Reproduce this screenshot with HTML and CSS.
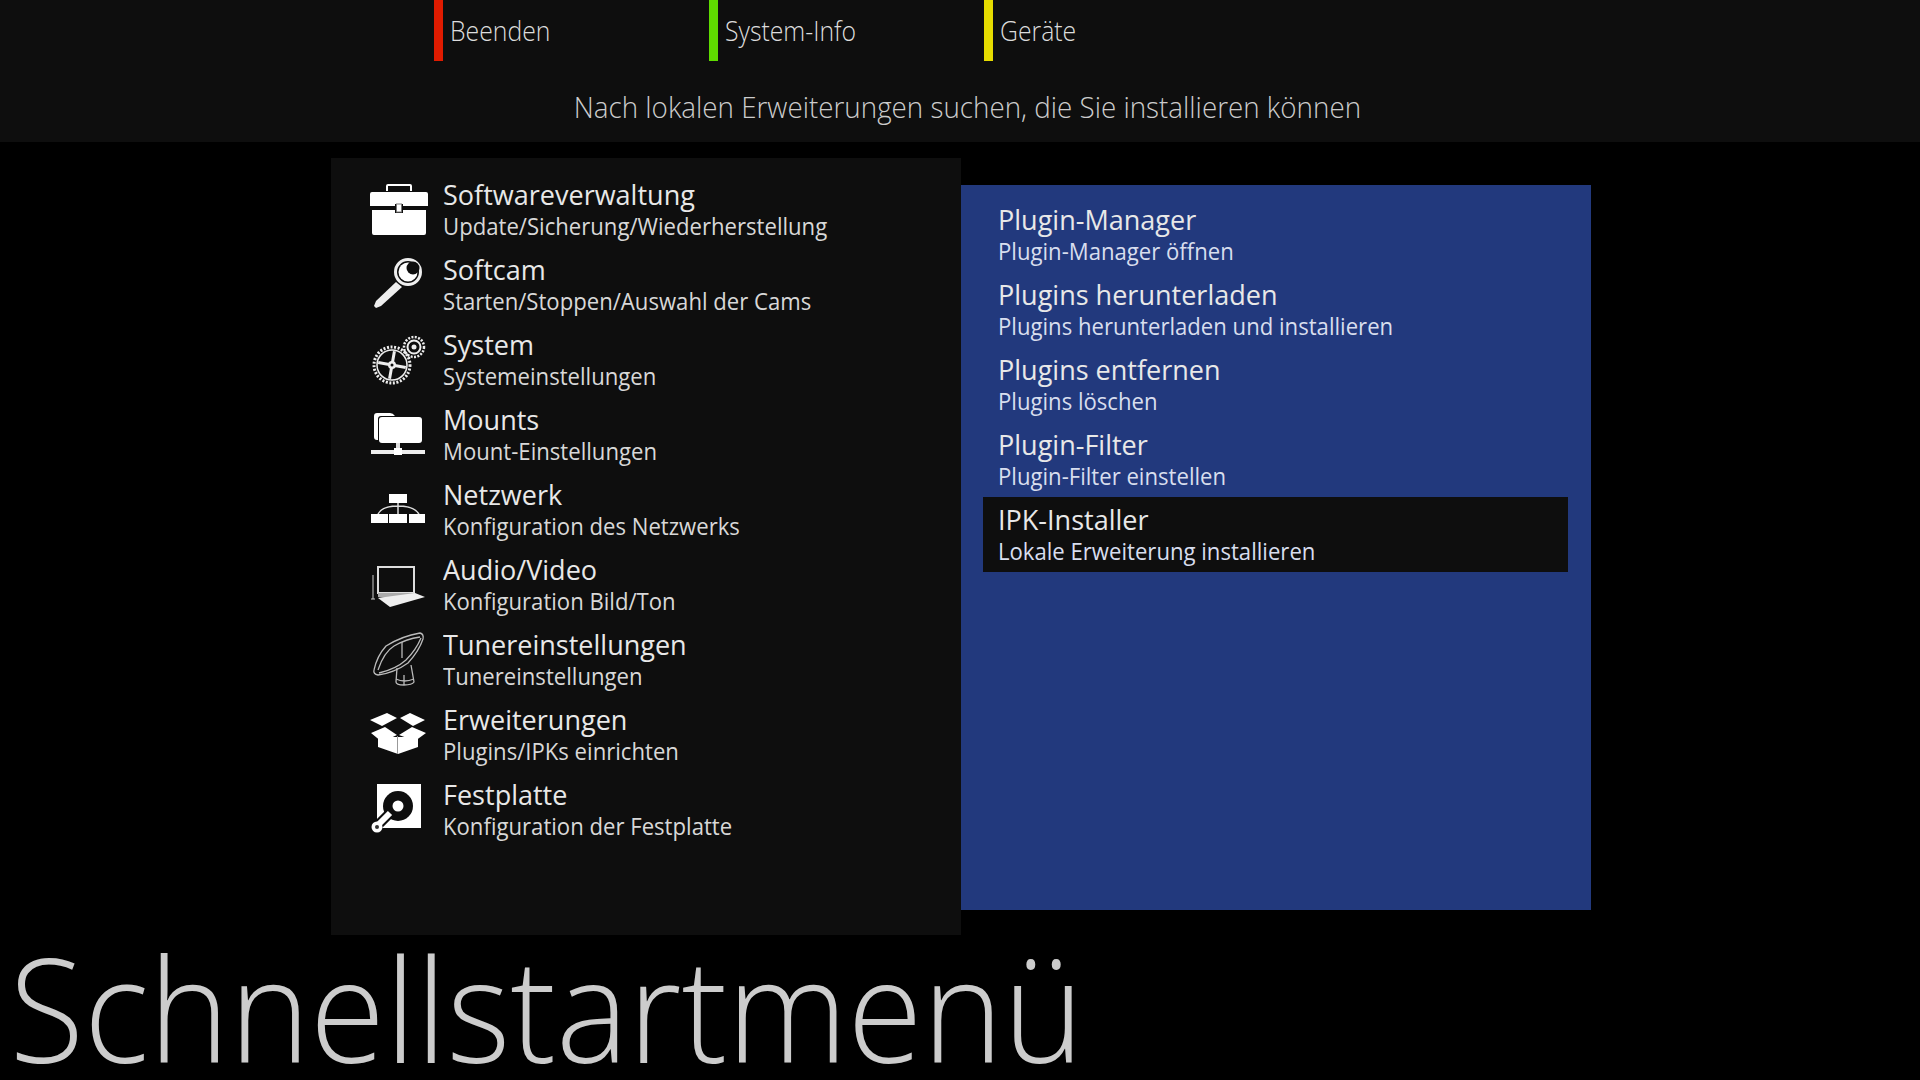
FILE: index.html
```html
<!DOCTYPE html>
<html lang="de">
<head>
    <meta charset="UTF-8">
    <title>Schnellstartmenü</title>
    <link rel="stylesheet" href="styles.css">
</head>
<body>
    <header class="top-bar">
        <div class="keys">
            <div class="key key-red"><span class="key-label">Beenden</span></div>
            <div class="key key-green"><span class="key-label">System-Info</span></div>
            <div class="key key-yellow"><span class="key-label">Geräte</span></div>
        </div>
        <div class="hint">Nach lokalen Erweiterungen suchen, die Sie installieren können</div>
    </header>

    <main class="panels">
        <section class="panel-left">
            <div class="row">
                <svg class="icon" viewBox="0 0 58 60">
                    <path d="M17 11V6q0-1 1-1h22q1 0 1 1v5" fill="none" stroke="#fff" stroke-width="2"/>
                    <path d="M0 14q0-2 2-2h54q2 0 2 2v12H33v-2h-8v2H0z" fill="#fff"/>
                    <path d="M2 30h23v3h8v-3h23v23q0 2-2 2H4q-2 0-2-2z" fill="#fff"/>
                    <rect x="26.500" y="24" width="5" height="8" fill="#fff" stroke="#777"/>
                </svg>
                <div class="row-text">
                    <div class="row-title">Softwareverwaltung</div>
                    <div class="row-sub">Update/Sicherung/Wiederherstellung</div>
                </div>
            </div>
            <div class="row">
                <svg class="icon" viewBox="0 0 58 60">
                    <circle cx="38" cy="17" r="12.500" fill="none" stroke="#eee" stroke-width="3"/>
                    <circle cx="38" cy="17" r="9.500" fill="#fff"/>
                    <circle cx="43" cy="13" r="6.500" fill="#0e0e0e"/>
                    <path d="M26 27L6 46l-2 5 2 2 5-2 21-19z" fill="#eee"/>
                </svg>
                <div class="row-text">
                    <div class="row-title">Softcam</div>
                    <div class="row-sub">Starten/Stoppen/Auswahl der Cams</div>
                </div>
            </div>
            <div class="row">
                <svg class="icon" viewBox="0 0 58 60">
                    <circle cx="22" cy="35" r="18" fill="none" stroke="#eee" stroke-width="3" stroke-dasharray="2 1.600"/>
                    <circle cx="22" cy="35" r="15" fill="none" stroke="#eee" stroke-width="1.500"/>
                    <path d="M22 21v28M8 35h28" stroke="#eee" stroke-width="3" transform="rotate(10 22 35)"/>
                    <circle cx="22" cy="35" r="4" fill="#eee"/>
                    <circle cx="22" cy="35" r="1.500" fill="#0e0e0e"/>
                    <circle cx="44" cy="17" r="10" fill="none" stroke="#eee" stroke-width="2.500" stroke-dasharray="2 1.400"/>
                    <circle cx="44" cy="17" r="6.500" fill="none" stroke="#eee" stroke-width="2"/>
                    <circle cx="44" cy="17" r="2.500" fill="#eee"/>
                </svg>
                <div class="row-text">
                    <div class="row-title">System</div>
                    <div class="row-sub">Systemeinstellungen</div>
                </div>
            </div>
            <div class="row">
                <svg class="icon" viewBox="0 0 58 60">
                    <path d="M4 11q0-3 3-3h13q3 0 5 3h-14q-3 0-3 3v21H7q-3 0-3-3z" fill="#fff"/>
                    <path d="M9 15q0-3 3-3h37q3 0 3 3v20q0 3-3 3H12q-3 0-3-3z" fill="#fff"/>
                    <path d="M26 38h4v7h-4z" fill="#ddd"/>
                    <path d="M1 45h23v4H1zM32 45h23v4H32z" fill="#eee"/>
                    <rect x="24" y="43" width="8" height="7" fill="#fff"/>
                </svg>
                <div class="row-text">
                    <div class="row-title">Mounts</div>
                    <div class="row-sub">Mount-Einstellungen</div>
                </div>
            </div>
            <div class="row">
                <svg class="icon" viewBox="0 0 58 60">
                    <rect x="19" y="14" width="18" height="9" fill="#fff"/>
                    <path d="M8 34Q12 26 28 26T49 34M28 23v11" fill="none" stroke="#ddd" stroke-width="1.500"/>
                    <path d="M1 34h17v9H1zM19 34h18v9H19zM39 34h16v9H39z" fill="#fff"/>
                </svg>
                <div class="row-text">
                    <div class="row-title">Netzwerk</div>
                    <div class="row-sub">Konfiguration des Netzwerks</div>
                </div>
            </div>
            <div class="row">
                <svg class="icon" viewBox="0 0 58 60">
                    <rect x="8" y="12" width="36" height="26" fill="none" stroke="#ddd" stroke-width="2"/>
                    <path d="M8 38h37l1 3-30 2-8-1z" fill="#aaa"/>
                    <path d="M8 43l37-5 10 4-35 10z" fill="#eee"/>
                    <path d="M3 20v24M1 44h4" stroke="#ccc" stroke-width="1"/>
                </svg>
                <div class="row-text">
                    <div class="row-title">Audio/Video</div>
                    <div class="row-sub">Konfiguration Bild/Ton</div>
                </div>
            </div>
            <div class="row">
                <svg class="icon" viewBox="0 0 58 60">
                    <g fill="none" stroke="#bbb" stroke-width="1.300">
                        <path d="M4 40Q7 26 16 16 32 6 50 3q4 1 3 6-4 12-15 24Q24 43 8 45q-5-1-4-5z"/>
                        <path d="M8 40Q14 22 24 16 36 9 50 7M9 43Q26 39 36 30 46 20 51 8"/>
                        <path d="M32 12v16"/>
                        <path d="M27 38l-1 14q0 3 8 3t10-3l-3-17"/>
                        <path d="M26 49q8 4 18 0M34 45v10"/>
                    </g>
                </svg>
                <div class="row-text">
                    <div class="row-title">Tunereinstellungen</div>
                    <div class="row-sub">Tunereinstellungen</div>
                </div>
            </div>
            <div class="row">
                <svg class="icon" viewBox="0 0 58 60">
                    <path d="M8 32h19l1 17-20-7zM28 32h20v10l-20 7z" fill="#fff"/>
                    <path d="M27.500 31v18" stroke="#999" stroke-width="1"/>
                    <path d="M0 15L17 8l10 5-15 8zM30 13l10-5 15 7-12 6z" fill="#fff"/>
                    <path d="M1 28l14-6 12 8-15 7zM29 30l13-8 14 6-11 8z" fill="#fff"/>
                </svg>
                <div class="row-text">
                    <div class="row-title">Erweiterungen</div>
                    <div class="row-sub">Plugins/IPKs einrichten</div>
                </div>
            </div>
            <div class="row">
                <svg class="icon" viewBox="0 0 58 60">
                    <rect x="7" y="4" width="44" height="44" fill="#fff"/>
                    <circle cx="28" cy="26" r="15" fill="#0e0e0e"/>
                    <circle cx="28" cy="26" r="5.500" fill="#fff"/>
                    <path d="M22 31L8 45" stroke="#0e0e0e" stroke-width="10"/>
                    <path d="M20 33L8 45" stroke="#fff" stroke-width="6"/>
                    <circle cx="7" cy="47" r="5.500" fill="#fff"/>
                    <circle cx="7" cy="47" r="2" fill="#333"/>
                </svg>
                <div class="row-text">
                    <div class="row-title">Festplatte</div>
                    <div class="row-sub">Konfiguration der Festplatte</div>
                </div>
            </div>
        </section>

        <section class="panel-right">
            <div class="plain-row">
                <div class="row-title">Plugin-Manager</div>
                <div class="row-sub">Plugin-Manager öffnen</div>
            </div>
            <div class="plain-row">
                <div class="row-title">Plugins herunterladen</div>
                <div class="row-sub">Plugins herunterladen und installieren</div>
            </div>
            <div class="plain-row">
                <div class="row-title">Plugins entfernen</div>
                <div class="row-sub">Plugins löschen</div>
            </div>
            <div class="plain-row">
                <div class="row-title">Plugin-Filter</div>
                <div class="row-sub">Plugin-Filter einstellen</div>
            </div>
            <div class="plain-row selected">
                <div class="row-title">IPK-Installer</div>
                <div class="row-sub">Lokale Erweiterung installieren</div>
            </div>
        </section>
    </main>

    <footer class="page-title">Schnellstartmenü</footer>
</body>
</html>
```

FILE: styles.css
```css
* {
    margin: 0;
    padding: 0;
    box-sizing: border-box;
}

body {
    width: 1920px;
    height: 1080px;
    overflow: hidden;
    background-color: #000;
    color: #eee;
    font-family: "Open Sans", "Noto Sans", sans-serif;
}

.top-bar {
    height: 142px;
    background-color: #0e0e0e;
}

.keys {
    display: flex;
    height: 61px;
    padding-left: 434px;
}

.key {
    width: 275px;
    padding-left: 7px;
    border-left: 9px solid;
    font-size: 28px;
    font-weight: 300;
    line-height: 60px;
    color: #ddd;
}

/* the box squeezes its fonts sideways */
.key-label {
    display: inline-block;
    transform: scaleX(0.885);
    transform-origin: left;
}

.key-red { border-color: #e01b00; }
.key-green { border-color: #5fdc00; }
.key-yellow { border-color: #e6dc00; }

.hint {
    margin-top: 26px;
    text-align: center;
    padding-left: 16px;
    font-size: 30px;
    font-weight: 300;
    line-height: 40px;
    color: #ccc;
    transform: scaleX(0.926);
}

.panels {
    display: flex;
    align-items: flex-start;
    margin-top: 16px;
    padding-left: 331px;
}

.panel-left {
    width: 630px;
    height: 777px;
    padding-top: 14px;
    padding-left: 39px;
    background-color: #0e0e0e;
}

.panel-right {
    width: 630px;
    height: 725px;
    margin-top: 27px;
    padding: 12px 23px 0 22px;
    background-color: #22397d;
}

.row {
    display: flex;
    align-items: center;
    height: 75px;
    gap: 15px;
}

.icon {
    width: 58px;
    height: 60px;
    flex-shrink: 0;
}

.plain-row {
    height: 75px;
    padding-left: 15px;
}

.plain-row,
.row-text {
    display: flex;
    flex-direction: column;
    justify-content: center;
}

.selected {
    background-color: #0e0e0e;
}

.row-title {
    margin-top: -2px;
    font-size: 28px;
    line-height: 36px;
    color: #e8e8e8;
    transform: scaleX(0.965);
    transform-origin: left;
}

.row-sub {
    margin-top: -1px;
    font-size: 23px;
    line-height: 30px;
    color: #d8d8d8;
    transform: scaleX(0.962);
    transform-origin: left;
}

.panel-right .row-sub {
    color: #d8deee;
}

.page-title {
    margin-top: 7px;
    padding-left: 10px;
    font-size: 144px;
    font-weight: 300;
    line-height: 130px;
    white-space: nowrap;
    color: #ccc;
    transform: scaleX(0.948);
    transform-origin: left;
}
```
